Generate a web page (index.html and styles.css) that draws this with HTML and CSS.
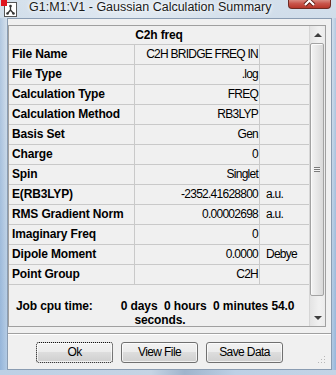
FILE: index.html
```html
<!DOCTYPE html>
<html>
<head>
<meta charset="utf-8">
<link rel="stylesheet" href="styles.css">
</head>
<body>
<div class="window">
  <div class="titlebar">
    <svg class="app-icon" width="17" height="17" viewBox="0 0 17 17">
      <rect x="3.5" y="2.5" width="12" height="14" fill="#fff" stroke="#555"/>
      <path d="M9.5 6 V10 M9.5 10 L6.5 13.5 M9.5 10 L12.5 13.5" stroke="#333" stroke-width="1.3" fill="none"/>
      <circle cx="9.5" cy="6" r="1.3" fill="#333"/>
      <circle cx="6.5" cy="13.5" r="1.3" fill="#333"/>
      <circle cx="12.5" cy="13.5" r="1.3" fill="#333"/>
      <rect x="0" y="0" width="6" height="6" fill="#e0141e"/>
    </svg>
    <span class="title">G1:M1:V1 - Gaussian Calculation Summary</span>
    <div class="close">
      <svg width="43" height="9" viewBox="0 0 43 9">
        <path d="M17 -4 L26 5 M26 -4 L17 5" stroke="#5a1a12" stroke-width="4" fill="none"/>
        <path d="M17 -4 L26 5 M26 -4 L17 5" stroke="#fff" stroke-width="2.2" fill="none"/>
      </svg>
    </div>
  </div>
  <div class="mid">
    <div class="frame-l"></div>
    <div class="client">
      <div class="panel">
        <div class="grid">
          <div class="head">C2h freq</div>
          <div class="row"><div class="k">File Name</div><div class="v">C2H BRIDGE FREQ IN</div><div class="u"></div></div>
          <div class="row"><div class="k">File Type</div><div class="v">.log</div><div class="u"></div></div>
          <div class="row"><div class="k">Calculation Type</div><div class="v">FREQ</div><div class="u"></div></div>
          <div class="row"><div class="k">Calculation Method</div><div class="v">RB3LYP</div><div class="u"></div></div>
          <div class="row"><div class="k">Basis Set</div><div class="v">Gen</div><div class="u"></div></div>
          <div class="row"><div class="k">Charge</div><div class="v">0</div><div class="u"></div></div>
          <div class="row"><div class="k">Spin</div><div class="v">Singlet</div><div class="u"></div></div>
          <div class="row"><div class="k">E(RB3LYP)</div><div class="v">-2352.41628800</div><div class="u">a.u.</div></div>
          <div class="row"><div class="k">RMS Gradient Norm</div><div class="v">0.00002698</div><div class="u">a.u.</div></div>
          <div class="row"><div class="k">Imaginary Freq</div><div class="v">0</div><div class="u"></div></div>
          <div class="row"><div class="k">Dipole Moment</div><div class="v">0.0000</div><div class="u">Debye</div></div>
          <div class="row"><div class="k">Point Group</div><div class="v">C2H</div><div class="u"></div></div>
          <div class="job">
            <div class="job-line"><span>Job cpu time:</span><span class="job-val">0 days  0 hours  0 minutes 54.0</span></div>
            <div class="job-line2">seconds.</div>
          </div>
        </div>
        <div class="scroll">
          <div class="sb-btn"><span class="arrow-up"></span></div>
          <div class="thumb"><span class="grip"></span></div>
          <div class="track"></div>
          <div class="sb-btn"><span class="arrow-down"></span></div>
        </div>
      </div>
      <div class="sep"></div>
      <div class="buttons">
        <div class="btn default">Ok</div>
        <div class="btn">View File</div>
        <div class="btn">Save Data</div>
        <svg class="sizegrip" width="9" height="9" viewBox="0 0 9 9">
          <g fill="#b8b8b8">
            <rect x="7" y="1" width="1" height="1"/>
            <rect x="4" y="4" width="1" height="1"/><rect x="7" y="4" width="1" height="1"/>
            <rect x="1" y="7" width="1" height="1"/><rect x="4" y="7" width="1" height="1"/><rect x="7" y="7" width="1" height="1"/>
          </g>
        </svg>
      </div>
    </div>
    <div class="frame-r"></div>
  </div>
  <div class="frame-b"></div>
</div>
</body>
</html>
```
FILE: styles.css
```css
html, body {
  margin: 0;
  padding: 0;
  width: 336px;
  height: 375px;
  overflow: hidden;
}

.window {
  display: flex;
  flex-direction: column;
  width: 336px;
  height: 375px;
  background:
    linear-gradient(to right, rgba(255,255,255,0) 0%, rgba(255,255,255,0.35) 40%, rgba(255,255,255,0) 75%),
    linear-gradient(to bottom, #d3dfeb 0%, #c3d4e6 30%, #a4c0de 70%, #92b5dc 100%);
  font-family: "Liberation Sans", Arial, sans-serif;
  color: #000;
}

.titlebar {
  height: 18px;
  display: flex;
  align-items: flex-start;
  flex: none;
}

.app-icon {
  margin-left: 1px;
  flex: none;
}

.title {
  margin-left: 11px;
  font-family: "Liberation Sans", Arial, sans-serif;
  font-size: 12.5px;
  line-height: normal;
  letter-spacing: 0;
  color: #1a1a1a;
  text-shadow: 0 0 5px rgba(255,255,255,0.95), 0 0 3px rgba(255,255,255,0.9);
  white-space: nowrap;
}

.close {
  margin-left: auto;
  margin-right: 5px;
  width: 43px;
  height: 9px;
  box-sizing: border-box;
  border: 1px solid #6e2a22;
  border-top: none;
  border-radius: 0 0 4px 4px;
  background: linear-gradient(to bottom, #d88a80 0%, #c9544a 45%, #b7372a 100%);
  overflow: hidden;
  display: flex;
  justify-content: center;
}

.close svg {
  display: block;
  margin-left: -1px;
  flex: none;
}

.mid {
  display: flex;
  height: 352px;
  flex: none;
}

.frame-l {
  width: 7px;
  flex: none;
  background: linear-gradient(to right, rgba(150,180,215,0.5), rgba(220,230,240,0.4));
}

.frame-r {
  flex: 1;
  background: linear-gradient(to right, rgba(220,230,240,0.4), rgba(150,180,215,0.5));
}

.frame-b {
  flex: 1;
  background: linear-gradient(to right, #bcd0e5, #c5d4e4 45%, #9fb4cc 55%, #bdd0e5 70%, #c3d4e6);
}

.client {
  width: 325px;
  box-sizing: border-box;
  border: 1px solid #8a9cb2;
  background: #f0f0f0;
  padding-top: 6px;
  display: flex;
  flex-direction: column;
}

.panel {
  width: 318px;
  height: 302px;
  box-sizing: border-box;
  border: 1px solid #a0a0a0;
  display: flex;
  flex: none;
}

.grid {
  width: 300px;
  display: flex;
  flex-direction: column;
}

.head {
  height: 19px;
  box-sizing: border-box;
  border-bottom: 1px solid #c9c9c9;
  font-weight: bold;
  font-size: 12px;
  line-height: 18px;
  text-align: center;
  letter-spacing: -0.15px;
}

.row {
  height: 20px;
  box-sizing: border-box;
  border-bottom: 1px solid #c9c9c9;
  display: grid;
  grid-template-columns: 126px 125px 49px;
  font-size: 12px;
  line-height: 19px;
  white-space: nowrap;
}

.k {
  border-right: 1px solid #c9c9c9;
  padding-left: 3px;
  font-weight: bold;
  letter-spacing: -0.15px;
  overflow: hidden;
}

.v {
  border-right: 1px solid #c9c9c9;
  text-align: right;
  padding-right: 1px;
  letter-spacing: -0.75px;
  overflow: hidden;
}

.u {
  padding-left: 6px;
  letter-spacing: -0.75px;
}

.job {
  flex: 1;
  padding-top: 14px;
  box-sizing: border-box;
  font-weight: bold;
  font-size: 12px;
  line-height: 14px;
  letter-spacing: -0.1px;
}

.job-line {
  display: flex;
  padding-left: 7px;
  white-space: pre;
}

.job-val {
  margin-left: 28px;
}

.job-line2 {
  text-align: center;
  padding-left: 2px;
}

.scroll {
  width: 16px;
  box-sizing: border-box;
  border-left: 1px solid #d6d6d6;
  background: linear-gradient(to right, #e4e4e4, #f1f1f1 60%, #ebebeb);
  display: flex;
  flex-direction: column;
}

.sb-btn {
  height: 17px;
  flex: none;
  display: flex;
  align-items: center;
  justify-content: center;
}

.arrow-up {
  width: 0;
  height: 0;
  border-left: 4px solid transparent;
  border-right: 4px solid transparent;
  border-bottom: 4px solid #3e3e3e;
}

.arrow-down {
  width: 0;
  height: 0;
  border-left: 4px solid transparent;
  border-right: 4px solid transparent;
  border-top: 4px solid #3e3e3e;
}

.thumb {
  height: 253px;
  flex: none;
  margin: 0 1px 0 0;
  box-sizing: border-box;
  border: 1px solid #a3a3a3;
  border-radius: 2px;
  background: linear-gradient(to right, #f4f4f4, #e7e7e7 50%, #d9d9d9);
  box-shadow: inset 1px 1px 0 #fbfbfb;
  display: flex;
  align-items: center;
  justify-content: center;
}

.grip {
  width: 6px;
  height: 5px;
  background: repeating-linear-gradient(to bottom, #7a7a7a 0, #7a7a7a 1px, #f4f4f4 1px, #f4f4f4 2px);
}

.track {
  flex: 1;
}

.sep {
  margin-top: 6px;
  height: 0;
  border-top: 1px solid #a0a0a0;
  border-bottom: 1px solid #ffffff;
  flex: none;
}

.buttons {
  margin-top: 7px;
  padding-left: 28px;
  display: flex;
  align-items: flex-start;
  gap: 8px;
}

.btn {
  width: 77px;
  height: 21px;
  box-sizing: border-box;
  border: 1px solid #707070;
  border-radius: 3px;
  background: linear-gradient(to bottom, #f2f2f2 0%, #ebebeb 50%, #dddddd 50%, #cfcfcf 100%);
  box-shadow: inset 0 0 0 1px rgba(255,255,255,0.7);
  font-size: 12px;
  line-height: 19px;
  letter-spacing: -0.6px;
  text-align: center;
  white-space: nowrap;
}

.btn.default {
  border: 1px dotted #111;
}

.sizegrip {
  margin-left: auto;
  margin-right: 5px;
  margin-top: 13px;
  flex: none;
}
```
